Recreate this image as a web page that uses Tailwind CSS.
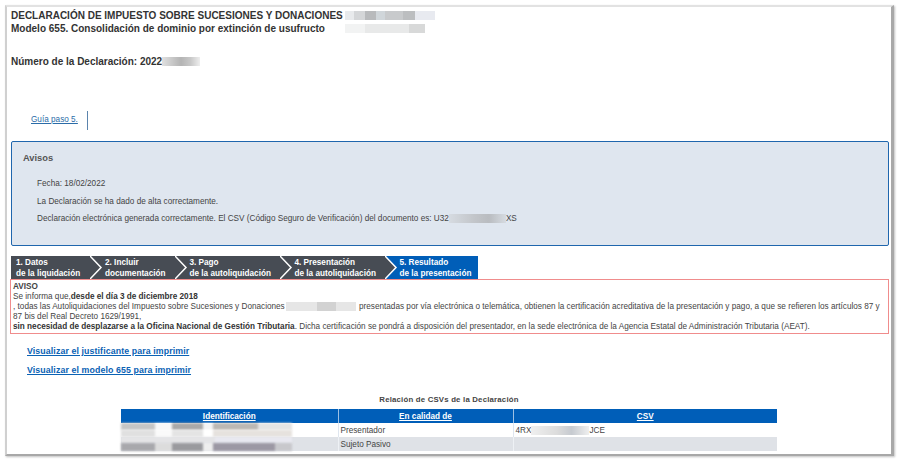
<!DOCTYPE html>
<html lang="es">
<head>
<meta charset="utf-8">
<title>Modelo 655</title>
<script src="https://cdn.jsdelivr.net/npm/@tailwindcss/browser@4"></script>
</head>
<body class="bg-white">
<div class="w-[900px] h-[462px] overflow-hidden bg-white pt-[5px] pl-[5px] font-['Liberation_Sans',Arial,sans-serif] text-[#444]">
  <div class="w-[889px] h-[451px] bg-white border-t-[2px] border-l-[2px] border-r-[3px] border-b-[2px] border-t-[#e2e2e2] border-l-[#d0d0d0] border-r-[#a8a8a8] border-b-[#a8a8a8] shadow-[1px_1px_2px_rgba(0,0,0,0.25)] pl-[3px] pr-[1px] overflow-hidden">

    <div class="pl-[1px] pt-[2px] text-[10px] leading-[13px] font-bold text-[#333]">
      <div class="flex items-center h-[13px]">
        <span>DECLARACIÓN DE IMPUESTO SOBRE SUCESIONES Y DONACIONES</span>
        <span class="ml-[2px] w-[90px] h-[9px] blur-[0.6px] bg-[linear-gradient(90deg,#e8eaec_0_10%,#d4d6d8_10%_22%,#b8babc_22%_35%,#d0d6da_35%_45%,#c8cacc_45%_65%,#bcbec0_65%_78%,#e8eaf0_78%_100%)]"></span>
      </div>
      <div class="flex items-center h-[13px]">
        <span>Modelo 655. Consolidación de dominio por extinción de usufructo</span>
        <span class="ml-[20px] w-[80px] h-[9px] blur-[0.6px] bg-[linear-gradient(90deg,#f2f3f3_0_25%,#e8e9e9_25%_80%,#d8d9d9_80%_100%)]"></span>
      </div>
    </div>

    <div class="pl-[1px] mt-[20px] flex items-center h-[13px] text-[10px] font-bold text-[#333]">
      <span>Número de la Declaración: 2022</span>
      <span class="w-[38px] h-[9px] blur-[0.7px] bg-[linear-gradient(90deg,#e0e0e0,#b4b4b4_50%,#c8c8c8_75%,#eeeeee)]"></span>
    </div>

    <div class="mt-[42px] h-[20px] flex items-center pl-[21px]">
      <a href="#" class="text-[8.2px] text-[#2b6ca8] underline">Guía paso 5.</a>
      <span class="ml-[9px] w-px h-[19px] bg-[#5b84ad]"></span>
    </div>

    <section class="mt-[11px] ml-[1px] h-[105px] border-[1.5px] border-[#1f66ad] rounded-[2px] bg-[#dfe6ef] pl-[11px] pt-[10px] pr-[4px] mr-[1px] text-[#444]">
      <h2 class="text-[9.3px] leading-[13px] font-bold text-[#555]">Avisos</h2>
      <div class="pl-[14px] pt-[13px] text-[8.2px] leading-[11px] space-y-[6.5px]">
        <p>Fecha: 18/02/2022</p>
        <p>La Declaración se ha dado de alta correctamente.</p>
        <p class="flex items-center">
          <span>Declaración electrónica generada correctamente. El CSV (Código Seguro de Verificación) del documento es: U32</span>
          <span class="w-[57px] h-[9px] blur-[0.7px] bg-[linear-gradient(90deg,#d6dbe1,#c2c5c9_45%,#b9bcc0_70%,#d6dbe1)]"></span>
          <span>XS</span>
        </p>
      </div>
    </section>

    <nav class="mt-[10px] ml-[1px] h-[23px] w-[467px] flex text-[8.2px] leading-[11.5px] font-bold text-white">
      <div class="w-[79px] bg-[#474c54] pl-[5px] pt-[0.5px] whitespace-nowrap">1. Datos<br>de la liquidación</div>
      <svg class="w-[14px] h-[23px] shrink-0" viewBox="0 0 14 23"><rect width="14" height="23" fill="#474c54"/><path d="M0 0 L11 11.5 L0 23" fill="none" stroke="#fff" stroke-width="1.5"/></svg>
      <div class="w-[71px] bg-[#474c54] pl-[1px] pt-[0.5px] whitespace-nowrap">2. Incluir<br>documentación</div>
      <svg class="w-[14px] h-[23px] shrink-0" viewBox="0 0 14 23"><rect width="14" height="23" fill="#474c54"/><path d="M0 0 L11 11.5 L0 23" fill="none" stroke="#fff" stroke-width="1.5"/></svg>
      <div class="w-[91px] bg-[#474c54] pl-[0.5px] pt-[0.5px] whitespace-nowrap">3. Pago<br>de la autoliquidación</div>
      <svg class="w-[14px] h-[23px] shrink-0" viewBox="0 0 14 23"><rect width="14" height="23" fill="#474c54"/><path d="M0 0 L11 11.5 L0 23" fill="none" stroke="#fff" stroke-width="1.5"/></svg>
      <div class="w-[91px] bg-[#474c54] pl-[0.5px] pt-[0.5px] whitespace-nowrap">4. Presentación<br>de la autoliquidación</div>
      <svg class="w-[14px] h-[23px] shrink-0" viewBox="0 0 14 23"><rect width="14" height="23" fill="#005eb8"/><path d="M0 0 L11 11.5 L0 23 Z" fill="#474c54"/><path d="M0 0 L11 11.5 L0 23" fill="none" stroke="#fff" stroke-width="1.5"/></svg>
      <div class="flex-1 bg-[#005eb8] pl-[0.5px] pt-[0.5px] whitespace-nowrap">5. Resultado<br>de la presentación</div>
    </nav>

    <section class="h-[55px] border border-[#f08c8c] px-[2px] pt-[2px] text-[8.2px] leading-[10px] text-[#444] mr-[1px]">
      <p class="font-bold">AVISO</p>
      <p>Se informa que,<b class="text-[#333]">desde el día 3 de diciembre 2018</b></p>
      <p>, todas las Autoliquidaciones del Impuesto sobre Sucesiones y Donaciones<span class="inline-block align-middle mx-[1px] w-[70px] h-[9px] blur-[0.6px] bg-[linear-gradient(90deg,#e6e6e6_0_45%,#d2d2d2_45%_72%,#e6e6e6_72%_100%)]"></span> presentadas por vía electrónica o telemática, obtienen la certificación acreditativa de la presentación y pago, a que se refieren los artículos 87 y 87 bis del Real Decreto 1629/1991,</p>
      <p><b class="text-[#333]">sin necesidad de desplazarse a la Oficina Nacional de Gestión Tributaria</b>. Dicha certificación se pondrá a disposición del presentador, en la sede electrónica de la Agencia Estatal de Administración Tributaria (AEAT).</p>
    </section>

    <div class="pl-[17px] pt-[11px] text-[8.8px] leading-[13px] font-bold tracking-[0.1px] text-[#0a62b4] underline">
      <p><a href="#">Visualizar el justificante para imprimir</a></p>
      <p class="mt-[6px]"><a href="#">Visualizar el modelo 655 para imprimir</a></p>
    </div>

    <h3 class="mt-[17px] text-center text-[7.8px] leading-[11px] font-bold tracking-[0.2px] text-[#444] pr-[2px]">Relación de CSVs de la Declaración</h3>

    <table class="mt-[4px] ml-[111px] w-[656px] table-fixed border-collapse text-[8.2px] leading-[12px] text-[#444]">
      <colgroup><col class="w-[217px]"><col class="w-[175px]"><col class="w-[264px]"></colgroup>
      <thead class="bg-[#005eb8] text-white font-bold">
        <tr class="h-[14px]">
          <th class="p-0 pt-[1px] font-bold underline border-r border-[#9dc0e4]">Identificación</th>
          <th class="p-0 pt-[1px] font-bold underline border-r border-[#9dc0e4]">En calidad de</th>
          <th class="p-0 pt-[1px] font-bold underline">CSV</th>
        </tr>
      </thead>
      <tbody>
        <tr class="h-[14px]">
          <td class="p-0 border-r border-[#dfe6ef]">
            <div class="w-[171px] h-[7px] blur-[1px] bg-[linear-gradient(90deg,#c6c6c6_0_20%,#f8f8f8_20%_30%,#a9a9a9_30%_48%,#f4f4f4_48%_54%,#bcb8b4_54%_80%,#e4e4e4_80%_100%)]"></div>
            <div class="w-[171px] h-[7px] blur-[1px] bg-[linear-gradient(90deg,#e0e0e0_0_20%,#fafafa_20%_30%,#e4e4e4_30%_48%,#ffffff_48%_54%,#e6e2de_54%_100%)]"></div>
          </td>
          <td class="p-0 pt-[1px] pl-[2px] border-r border-[#dfe6ef]">Presentador</td>
          <td class="p-0 pt-[1px] pl-[2px]"><span class="flex items-center">4RX<span class="w-[58px] h-[9px] blur-[0.7px] bg-[linear-gradient(90deg,#efefef,#dcdcdc_45%,#c6cad0_70%,#efefef)]"></span>JCE</span></td>
        </tr>
        <tr class="h-[14px] bg-[#dfe2e7]">
          <td class="p-0 border-r border-[#eef1f5]">
            <div class="w-[171px] h-[6px] blur-[1px] bg-[linear-gradient(90deg,#e4e4e6_0_55%,#e8e8f0_55%_100%)]"></div>
            <div class="w-[171px] h-[8px] blur-[1px] bg-[linear-gradient(90deg,#a8a8ac_0_20%,#dcdcdc_20%_30%,#9a9a9e_30%_48%,#eeeeee_48%_54%,#9c98a4_54%_90%,#c8c8cc_90%_100%)]"></div>
          </td>
          <td class="p-0 pt-[1px] pl-[2px] border-r border-[#eef1f5]">Sujeto Pasivo</td>
          <td></td>
        </tr>
      </tbody>
    </table>
  </div>
</div>
</body>
</html>
